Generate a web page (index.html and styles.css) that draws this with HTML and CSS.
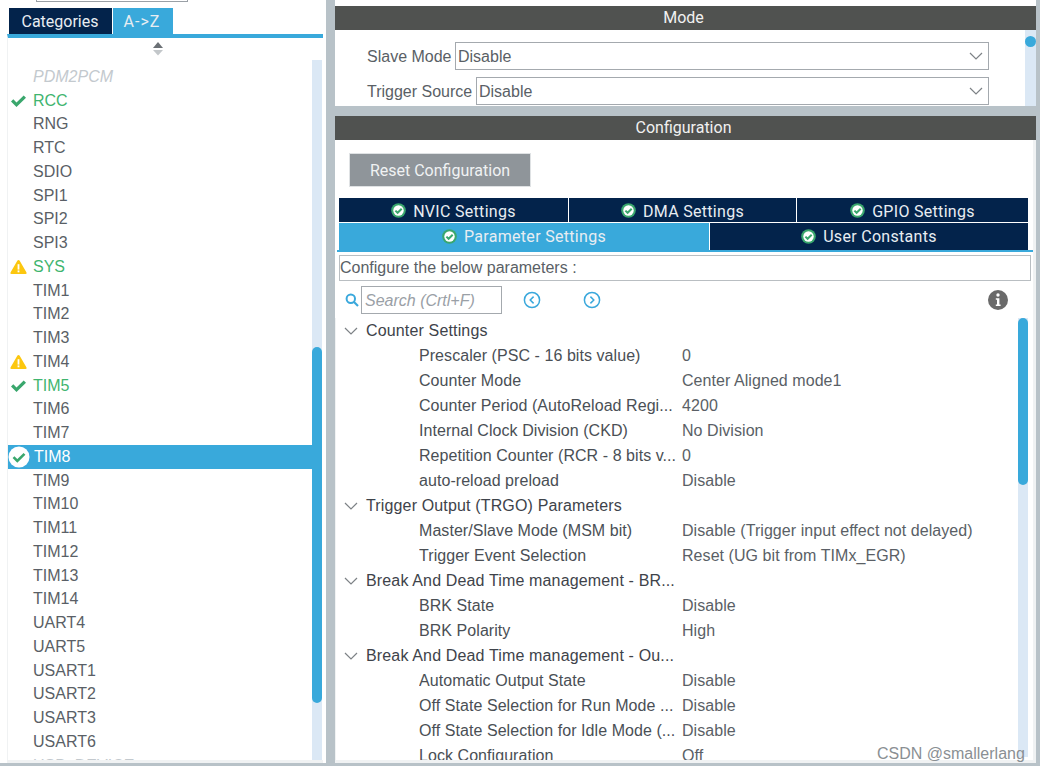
FILE: index.html
```html
<!DOCTYPE html>
<html lang="en">
<head>
<meta charset="utf-8">
<title>Timers</title>
<link rel="stylesheet" href="styles.css">
</head>
<body>
<svg class="defs" width="0" height="0" aria-hidden="true">
  <symbol id="check" viewBox="0 0 16 16"><path d="M.5 8.6 L2.8 6.3 L6 9.4 L13.2 2.4 L15.5 4.7 L6 14 Z" fill="#3aa76d"/></symbol>
  <symbol id="warn" viewBox="0 0 17 16"><path d="M8.5 1 Q9.3 1 9.7 1.8 L16.5 13.4 Q17 15 15.5 15 L1.5 15 Q0 15 .5 13.4 L7.3 1.8 Q7.7 1 8.5 1 Z" fill="#fcc70f"/><rect x="7.6" y="5.2" width="1.8" height="5.4" fill="#fff"/><rect x="7.6" y="11.4" width="1.8" height="1.9" fill="#fff"/></symbol>
  <symbol id="ok" viewBox="0 0 15 15"><circle cx="7.5" cy="7.5" r="7.3" fill="#3aa76d"/><circle cx="7.5" cy="7.5" r="5.2" fill="#fff"/><path d="M4.4 7.6 L6.6 9.8 L10.7 5.7" fill="none" stroke="#3aa76d" stroke-width="2"/></symbol>
  <symbol id="chev" viewBox="0 0 14 8"><path d="M1 1 L7 7 L13 1" fill="none" stroke="#7d8286" stroke-width="1.2"/></symbol>
</svg>
<main class="app">
  <aside class="left">
    <div class="search-stub"></div>
    <div class="side-tabs">
      <div class="side-tab navy">Categories</div>
      <div class="side-tab blue">A-&gt;Z</div>
    </div>
    <div class="side-panel">
      <div class="side-main">
        <svg class="sort" width="12" height="14" viewBox="0 0 12 14"><path d="M6 0 L11 6 L1 6 Z" fill="#6b7075"/><path d="M6 13.5 L11 8 L1 8 Z" fill="#c3c7ca"/></svg>
        <ul class="list">
          <li class="row disabled"><span class="ico"></span><span>PDM2PCM</span></li>
          <li class="row green"><svg class="ico"><use href="#check"/></svg><span>RCC</span></li>
          <li class="row"><span class="ico"></span><span>RNG</span></li>
          <li class="row"><span class="ico"></span><span>RTC</span></li>
          <li class="row"><span class="ico"></span><span>SDIO</span></li>
          <li class="row"><span class="ico"></span><span>SPI1</span></li>
          <li class="row"><span class="ico"></span><span>SPI2</span></li>
          <li class="row"><span class="ico"></span><span>SPI3</span></li>
          <li class="row green"><svg class="ico"><use href="#warn"/></svg><span>SYS</span></li>
          <li class="row"><span class="ico"></span><span>TIM1</span></li>
          <li class="row"><span class="ico"></span><span>TIM2</span></li>
          <li class="row"><span class="ico"></span><span>TIM3</span></li>
          <li class="row"><svg class="ico"><use href="#warn"/></svg><span>TIM4</span></li>
          <li class="row green"><svg class="ico"><use href="#check"/></svg><span>TIM5</span></li>
          <li class="row"><span class="ico"></span><span>TIM6</span></li>
          <li class="row"><span class="ico"></span><span>TIM7</span></li>
          <li class="row selected"><svg class="ico-big" viewBox="0 0 22 22"><circle cx="11" cy="11" r="10.5" fill="#fff"/><path d="M5.5 11.2 L9.3 15 L16.5 7.8" fill="none" stroke="#3aa76d" stroke-width="2.6"/></svg><span>TIM8</span></li>
          <li class="row"><span class="ico"></span><span>TIM9</span></li>
          <li class="row"><span class="ico"></span><span>TIM10</span></li>
          <li class="row"><span class="ico"></span><span>TIM11</span></li>
          <li class="row"><span class="ico"></span><span>TIM12</span></li>
          <li class="row"><span class="ico"></span><span>TIM13</span></li>
          <li class="row"><span class="ico"></span><span>TIM14</span></li>
          <li class="row"><span class="ico"></span><span>UART4</span></li>
          <li class="row"><span class="ico"></span><span>UART5</span></li>
          <li class="row"><span class="ico"></span><span>USART1</span></li>
          <li class="row"><span class="ico"></span><span>USART2</span></li>
          <li class="row"><span class="ico"></span><span>USART3</span></li>
          <li class="row"><span class="ico"></span><span>USART6</span></li>
          <li class="row disabled plain"><span class="ico"></span><span>USB_DEVICE</span></li>
        </ul>
      </div>
      <div class="side-track"><div class="side-thumb"></div></div>
    </div>
  </aside>

  <section class="right">
    <div class="mode">
      <h2 class="bar">Mode</h2>
      <div class="mode-body">
        <div class="mode-form">
          <div class="field"><label>Slave Mode</label><div class="select"><span>Disable</span><svg class="select-chev"><use href="#chev"/></svg></div></div>
          <div class="field"><label>Trigger Source</label><div class="select"><span>Disable</span><svg class="select-chev"><use href="#chev"/></svg></div></div>
        </div>
        <div class="mode-track"><div class="mode-dot"></div></div>
      </div>
    </div>

    <div class="config">
      <h2 class="bar">Configuration</h2>
      <div class="config-body">
        <button class="reset" type="button">Reset Configuration</button>
        <div class="tabs top-tabs">
          <div class="tab w1"><svg class="ok"><use href="#ok"/></svg>NVIC Settings</div>
          <div class="tab w2"><svg class="ok"><use href="#ok"/></svg>DMA Settings</div>
          <div class="tab w3"><svg class="ok"><use href="#ok"/></svg>GPIO Settings</div>
        </div>
        <div class="tabs bottom-tabs">
          <div class="tab active w4"><svg class="ok"><use href="#ok"/></svg>Parameter Settings</div>
          <div class="tab w5"><svg class="ok"><use href="#ok"/></svg>User Constants</div>
        </div>
        <div class="tab-rule"></div>
        <div class="hint">Configure the below parameters :</div>
        <div class="tools">
          <svg class="mag" width="14" height="14" viewBox="0 0 14 14"><circle cx="5.8" cy="5.8" r="4.2" fill="none" stroke="#3aa8dc" stroke-width="2"/><path d="M9 9 L13 13" stroke="#3aa8dc" stroke-width="2.2"/></svg>
          <div class="search">Search (Crtl+F)</div>
          <svg class="nav first" width="18" height="18" viewBox="0 0 18 18"><circle cx="9" cy="9" r="7.6" fill="none" stroke="#3aa8dc" stroke-width="1.5"/><path d="M10.6 5.6 L7.2 9 L10.6 12.4" fill="none" stroke="#3aa8dc" stroke-width="1.5"/></svg>
          <svg class="nav second" width="18" height="18" viewBox="0 0 18 18"><circle cx="9" cy="9" r="7.6" fill="none" stroke="#3aa8dc" stroke-width="1.5"/><path d="M7.4 5.6 L10.8 9 L7.4 12.4" fill="none" stroke="#3aa8dc" stroke-width="1.5"/></svg>
          <svg class="info" width="20" height="20" viewBox="0 0 20 20"><circle cx="10" cy="10" r="10" fill="#6a6a6a"/><circle cx="10" cy="5" r="1.7" fill="#fff"/><path d="M7.8 8.2 H11.4 V14.4 H12.6 V16 H7.8 V14.4 H9 V9.8 H7.8 Z" fill="#fff"/></svg>
        </div>
        <div class="params">
          <div class="tree">
            <div class="group"><svg class="tree-chev"><use href="#chev"/></svg>Counter Settings</div>
            <div class="param"><span class="name">Prescaler (PSC - 16 bits value)</span><span>0</span></div>
            <div class="param"><span class="name">Counter Mode</span><span>Center Aligned mode1</span></div>
            <div class="param"><span class="name">Counter Period (AutoReload Regi...</span><span>4200</span></div>
            <div class="param"><span class="name">Internal Clock Division (CKD)</span><span>No Division</span></div>
            <div class="param"><span class="name">Repetition Counter (RCR - 8 bits v...</span><span>0</span></div>
            <div class="param"><span class="name">auto-reload preload</span><span>Disable</span></div>
            <div class="group"><svg class="tree-chev"><use href="#chev"/></svg>Trigger Output (TRGO) Parameters</div>
            <div class="param"><span class="name">Master/Slave Mode (MSM bit)</span><span>Disable (Trigger input effect not delayed)</span></div>
            <div class="param"><span class="name">Trigger Event Selection</span><span>Reset (UG bit from TIMx_EGR)</span></div>
            <div class="group"><svg class="tree-chev"><use href="#chev"/></svg>Break And Dead Time management - BR...</div>
            <div class="param"><span class="name">BRK State</span><span>Disable</span></div>
            <div class="param"><span class="name">BRK Polarity</span><span>High</span></div>
            <div class="group"><svg class="tree-chev"><use href="#chev"/></svg>Break And Dead Time management - Ou...</div>
            <div class="param"><span class="name">Automatic Output State</span><span>Disable</span></div>
            <div class="param"><span class="name">Off State Selection for Run Mode ...</span><span>Disable</span></div>
            <div class="param"><span class="name">Off State Selection for Idle Mode (...</span><span>Disable</span></div>
            <div class="param"><span class="name">Lock Configuration</span><span>Off</span></div>
          </div>
          <div class="param-track"><div class="param-thumb"></div></div>
        </div>
      </div>
    </div>
  </section>
</main>
<div class="watermark">CSDN @smallerlang</div>
</body>
</html>
```

FILE: styles.css
```css
* { box-sizing: border-box; }
html, body { margin: 0; padding: 0; width: 1040px; height: 772px; overflow: hidden; background: #fff; }
body { font-family: "Liberation Sans", Arial, sans-serif; font-size: 16px; color: #4a4f55; position: relative; }
.defs { position: absolute; }
.app { display: flex; height: 772px; }

/* left column */
.left { width: 326px; flex: none; padding-left: 7px; height: 766px; display: flex; flex-direction: column; border-bottom: 3px solid #b8c2c8; }
.search-stub { width: 152px; height: 2px; margin-left: 29px; border: 1px solid #9aa0a6; border-top: 0; background: #fff; flex: none; }
.side-tabs { display: flex; margin: 6px 0 0 2px; height: 26px; gap: 1px; flex: none; }
.side-tab { color: #e8edf2; text-align: center; font-family: Roboto, sans-serif; line-height: 27px; }
.navy { width: 103px; background: #03234b; padding-right: 1px; }
.blue { width: 60px; background: #39a9db; letter-spacing: 1px; padding-right: 2px; }
.side-panel { flex: 1; min-height: 0; width: 316px; border-top: 4px solid #39a9db; border-left: 1px solid #f0f2f3; border-bottom: 3px solid #f0f2f3; display: flex; overflow: hidden; margin-right: 3px; }
.side-main { flex: 1; min-width: 0; overflow: hidden; }
.sort { display: block; margin: 4px 0 0 144px; }
.list { list-style: none; margin: 9px 0 0; padding: 0; }
.row { height: 23.75px; display: flex; align-items: center; white-space: nowrap; font-size: 16px; color: #5a5f66; }
.ico { width: 17px; height: 16px; margin: 0 6px 0 2px; flex: none; }
.ico-big { width: 22px; height: 22px; margin: 0 4px 0 0; flex: none; }
.green { color: #3fb56f; }
.disabled { color: #c3c9ce; font-style: italic; }
.plain { font-style: normal; }
.selected { background: #39a9db; color: #fff; }
.side-track { width: 10px; margin: 22px 1px 0 0; background: #dbe8f5; flex: none; }
.side-thumb { width: 10px; height: 356px; margin-top: 287px; background: #39a9db; border-radius: 5px; }

/* right column */
.right { flex: 1; min-width: 0; background: #b8c2c8; border-left: 9px solid #b8c2c8; border-right: 4px solid #b8c2c8; height: 766px; display: flex; flex-direction: column; }
.mode { background: #fff; padding-top: 6px; height: 106px; flex: none; }
.bar { margin: 0; height: 24px; background: #505250; color: #f1f1f1; font-family: Roboto, sans-serif; font-weight: 400; font-size: 16px; line-height: 23px; text-align: center; padding-right: 4px; }
.mode-body { display: flex; height: 76px; overflow: hidden; }
.mode-form { flex: 1; min-width: 0; padding: 12px 0 0 32px; }
.field { display: flex; align-items: center; height: 28px; margin-bottom: 7px; }
.field label { color: #5a5f66; white-space: nowrap; padding-top: 2px; }
.select { flex: none; margin-left: auto; margin-right: 36px; height: 28px; border: 1px solid #a4a9ae; display: flex; align-items: center; justify-content: space-between; padding: 0 5px 0 2px; color: #5a5f66; }
.select span { padding-top: 2px; }
.field:first-child .select { width: 534px; }
.field:last-child .select { width: 513px; }
.select-chev { width: 14px; height: 8px; }
.mode-track { width: 11px; background: #dbe8f5; flex: none; }
.mode-dot { width: 11px; height: 11px; border-radius: 50%; background: #39a9db; margin-top: 6px; }

.config { margin: 10px 0 3px; flex: 1; min-height: 0; background: #fff; display: flex; flex-direction: column; }
.config-body { flex: 1; min-height: 0; display: flex; flex-direction: column; border-bottom: 3px solid #f0f2f3; border-right: 3px solid #f0f2f3; }
.reset { width: 182px; height: 34px; margin: 13px 0 0 14px; border: 1px solid #dfe2e4; background: #8f959a; color: #f0f2f3; font: 16px Roboto, sans-serif; flex: none; padding: 0; }
.tabs { display: flex; margin-left: 4px; width: 689px; flex: none; gap: 1px; font-family: Roboto, sans-serif; }
.top-tabs { margin-top: 11px; height: 24px; }
.top-tabs .tab { padding-top: 2px; }
.bottom-tabs { margin-top: 1px; height: 27px; }
.tab { background: #03234b; color: #e8edf2; display: flex; align-items: center; justify-content: center; letter-spacing: .3px; white-space: nowrap; }
.tab.active { background: #39a9db; }
.w1 { width: 229px; } .w2 { width: 227px; } .w3 { width: 231px; }
.w4 { width: 370px; } .w5 { width: 318px; }
.ok { width: 15px; height: 15px; margin-right: 7px; flex: none; }
.top-tabs .ok { margin-top: -2px; }
.tab-rule { height: 2px; margin: 0 0 0 2px; background: #39a9db; flex: none; }
.hint { margin: 3px 2px 0 4px; height: 26px; border: 1px solid #b9bec2; line-height: 24px; color: #5a5f66; flex: none; white-space: nowrap; }
.tools { display: flex; align-items: center; height: 28px; margin-top: 5px; padding-left: 10px; flex: none; }
.mag { flex: none; margin-right: 2px; }
.search { width: 141px; height: 28px; border: 1px solid #a4a9ae; color: #9aa0a6; font-style: italic; padding-left: 3px; line-height: 28px; white-space: nowrap; overflow: hidden; }
.nav { flex: none; }
.first { margin-left: 21px; }
.second { margin-left: 42px; }
.info { flex: none; margin-left: 387px; }
.params { flex: 1; min-height: 0; display: flex; overflow: hidden; margin-top: 4px; border-left: 1px solid #f0f2f3; }
.tree { flex: 1; min-width: 0; }
.group { height: 25px; display: flex; align-items: center; color: #3e434a; padding-left: 30px; position: relative; white-space: nowrap; letter-spacing: .15px; }
.tree-chev { width: 14px; height: 8px; position: absolute; left: 8px; top: 9px; }
.param { height: 25px; display: flex; align-items: center; padding-left: 83px; color: #5a5f66; white-space: nowrap; letter-spacing: .06px; }
.name { width: 263px; flex: none; overflow: hidden; color: #4a4f55; }
.param-track { width: 10px; margin: 0 5px 3px 0; background: #dbe8f5; flex: none; }
.param-thumb { height: 167px; background: #39a9db; border-radius: 5px; }
.watermark { position: absolute; left: 877px; top: 745px; font-family: "Liberation Sans", sans-serif; font-size: 16px; color: #8a8f93; white-space: nowrap; }
```
